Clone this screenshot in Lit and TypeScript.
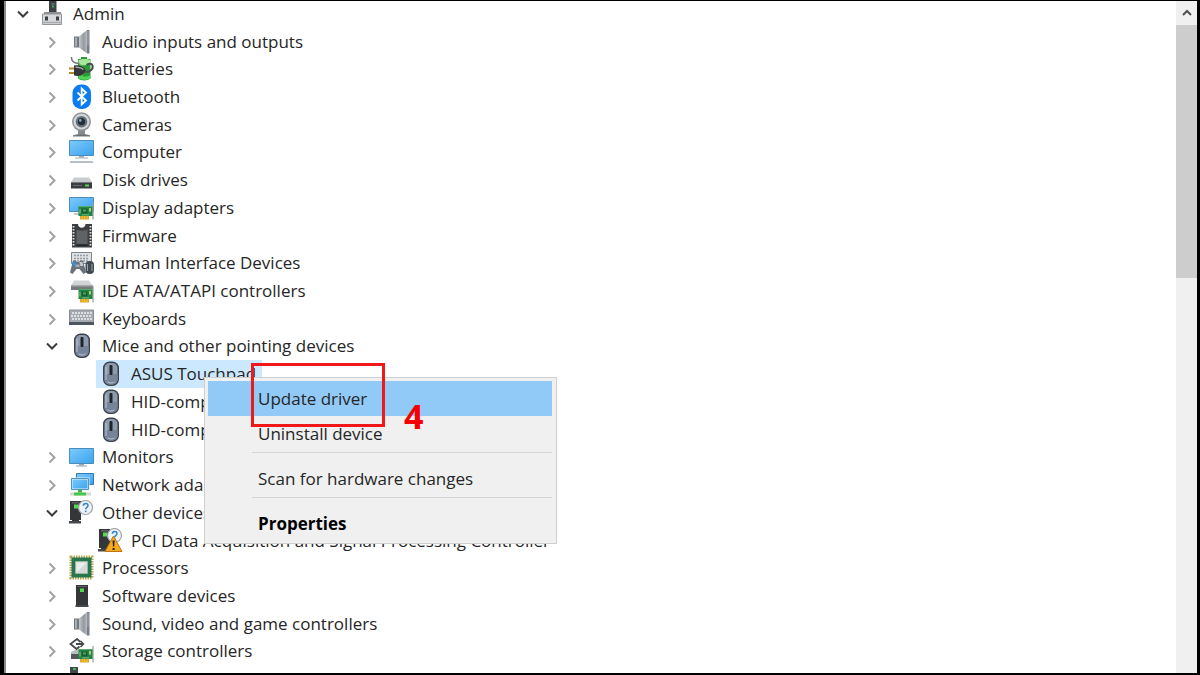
import { LitElement, html, svg, css, nothing, TemplateResult } from "lit";
import { customElement, property } from "lit/decorators.js";

type Glyph = TemplateResult<2>;

interface Device {
  label: string;
  icon: string;
  level: number;
  state?: "open" | "closed";
  selected?: boolean;
}

const mouse = svg`
  <rect x="5" y=".5" width="16" height="24.500" rx="6.500" fill="#3b424c"/>
  <rect x="6.500" y="2" width="13" height="21.500" rx="5" fill="#8e9aad"/>
  <path d="M6.500 13h13v5.500a5 5 0 0 1-5 5h-3a5 5 0 0 1-5-5z" fill="#76849a"/>
  <path d="M8 6v13M9.500 20.800c2 1.600 5 1.600 7 0" stroke="#b9c3d0" fill="none"/>
  <rect x="11.500" y="4" width="3" height="10" rx="1" fill="#20252c"/>`;

const speaker = svg`
  <defs><linearGradient id="cone" x1="0" x2="1"><stop offset="0" stop-color="#c3c7ca"/><stop offset=".6" stop-color="#9499a0"/><stop offset="1" stop-color="#b9bdc1"/></linearGradient></defs>
  <path d="M5 7.500h6v11H5z" fill="#737981"/><path d="M6 8.500h2v9H6z" fill="#a9aeb4"/>
  <path d="M10 7.500l8-6.500v23.500l-8-6z" fill="url(#cone)"/>
  <path d="M18 1h2.500v23.500H18z" fill="#777d84"/><path d="M18.500 2h1v14h-1z" fill="#a8adb2"/>`;

const card = svg`
  <path d="M9.500 11h14.500v10H9.500z" fill="#238447"/><path d="M9.500 11h14v1h-14z" fill="#58ad6a"/>
  <path d="M12.500 13.500h6v5h-6z" fill="#1b5e33"/><path d="M14 14.500h3v2h-3z" fill="#4ca463"/><path d="M20 13h2v3.500h-2z" fill="#a7d36e"/>
  <path d="M10.500 14h1v4.500h-1zM13 19.500h7v.8h-7z" fill="#8fce83"/>
  <path d="M11 21h9v3.500h-9z" fill="#dda71f"/><path d="M13 21v3.500M15.500 21v3.500M18 21v3.500" stroke="#f3ce62" stroke-width=".7"/>
  <path d="M24 8v16.500" stroke="#9aa2a0" stroke-width="1.300"/>`;

const question = svg`
  <path d="M1 1h11v19H1z" fill="#343638"/><path d="M3 2h7v1.500H3z" fill="#5c6063"/>
  <path d="M5 4.500h4v4H5z" fill="#54dc50"/><path d="M3 19h7v2.500H3z" fill="#343638"/><path d="M0 21h12v2.500H0z" fill="#45484b"/>
  <circle cx="16.500" cy="7.500" r="7" fill="#eef2f5" stroke="#a0a6ac" stroke-width="1.200"/>
  <path d="M14.300 5.700c.2-3 4.700-3 4.700-.2 0 1.900-2.300 1.900-2.300 3.800" fill="none" stroke="#2f83cf" stroke-width="1.500"/><circle cx="16.700" cy="11.300" r=".9" fill="#2f83cf"/>`;

const sky = (id: string) => svg`<defs><linearGradient id=${id} x1="0" y1="0" x2="1" y2="1"><stop offset="0" stop-color="#7ecbfb"/><stop offset="1" stop-color="#3aa2ee"/></linearGradient></defs>`;

const glyphs: Record<string, Glyph> = {
  hub: svg`
    <path d="M9 0h7.500v11H9z" fill="#3e4246"/><path d="M11.500 2h3v2h-3z" fill="#62676b"/><path d="M12 4.500h2v2h-2z" fill="#3fae50"/>
    <path d="M4 11h17v2H4z" fill="#8d9093"/><path d="M2.500 13h19v10.500h-19z" fill="#d6d8da" stroke="#929598"/>
    <path d="M5 15.500h3v4H5zM16 15.500h3v4h-3z" fill="#3d4043"/><path d="M2.500 21.500h19" stroke="#a8abad" stroke-width="1.500"/>`,
  speaker,
  battery: svg`
    <path d="M9 3h3V1h6v2h3.500v19.500c-3 2.500-9.500 2.500-12.500 0z" fill="#2c9a35"/>
    <path d="M9.500 4c3-1.500 9-1.500 12 0v4c-3 1.500-9 1.500-12 0z" fill="#a5e89a"/>
    <path d="M10 9h4v12h-4z" fill="#4cbc4c"/><path d="M9.500 19c3 2 9 2 12 0v3.500c-3 1.800-9 1.800-12 0z" fill="#4ed558"/>
    <path d="M2.500 1c-.5 4 2 6 8 6.500" fill="none" stroke="#777b7e" stroke-width="1.500"/>
    <path d="M16.500 16c5 0 8-3 7-6.500-.8-2.500-4-2-6-.5" fill="none" stroke="#4a4e51" stroke-width="2"/>
    <path d="M0 12.500h6M0 17h6" stroke="#b28a26" stroke-width="2"/>
    <path d="M5 9.500c5-1 10 .5 12 5-2 4.500-7 6.500-12 5z" fill="#34373a"/><path d="M6.500 11.300c4-.5 6 .4 8 2.200" fill="none" stroke="#a3a7aa" stroke-width="1.500"/>`,
  bluetooth: svg`
    <rect x="3.500" y=".5" width="18.500" height="24.500" rx="8.500" fill="#0a7df0"/>
    <path d="M8.500 8.500l8.500 8-4.300 4V4.500l4.300 4-8.500 8" fill="none" stroke="#fff" stroke-width="1.800"/>`,
  camera: svg`
    <path d="M9 18h7v4H9z" fill="#85898c"/><path d="M4 24c3-2 14-2 17 0z" fill="#5d6164" stroke="#777b7e"/>
    <circle cx="12.500" cy="9.700" r="9.500" fill="#909497"/><circle cx="12.500" cy="9.700" r="7.900" fill="#d2d5d7"/>
    <circle cx="12.500" cy="9.700" r="5.800" fill="#66717b"/><circle cx="12.500" cy="9.700" r="3.600" fill="#252d36"/><circle cx="11.300" cy="8.400" r="1.300" fill="#8db1cc"/>`,
  computer: svg`${sky("pc")}
    <path d="M.5 1.500h24v15H.5z" fill="url(#pc)" stroke="#4a8dbd"/><path d="M10 17h5v1.500h-5z" fill="#9aa9b5"/><path d="M6 18.500h13v1H6z" fill="#a3b0ba"/>
    <path d="M1.500 22h22l1 2H.5z" fill="#b4bfc8"/>`,
  disk: svg`
    <path d="M5 10.500h15l3 4.500H2z" fill="#c9ccce"/><path d="M2 15h21v6.500H2z" fill="#3b3e41"/><path d="M2 15h21v1H2z" fill="#75797c"/>
    <path d="M16 17.500h4v2h-4z" fill="#58d34f"/><path d="M4 18.500h9" stroke="#696d70"/>`,
  display: svg`${sky("da")}
    <path d="M.5 2.500h24v14H.5z" fill="url(#da)" stroke="#4a8dbd"/><path d="M5 18.500h5v1H5z" fill="#8595a2"/>${card}`,
  firmware: svg`
    <path d="M3 1h6c0 5 7.500 5 7.500 0H23v23.500H3z" fill="#3c3e40"/><path d="M7.500 6.500c2 1.500 9 1.500 11 0V21h-11z" fill="#606366"/>
    <path d="M4.500 3v20.500M21.500 3v20.500" stroke="#e2e4e5" stroke-width="1.800" stroke-dasharray="1.600 1.400"/><path d="M7.500 21.500h11V23h-11z" fill="#222425"/>`,
  hid: svg`
    <path d="M2.500 2.500h20v11h-20z" fill="#dfe2e4" stroke="#7c848a"/><path d="M5 5.500h15M5 8.500h15M5 11h15" stroke="#949ca3" stroke-width="1.500" stroke-dasharray="2 1"/>
    <path d="M4 10.500h2.500l1.500 1.500h2l1.500-1.500H14l3 12-2.500 1.500-4-5h-3l-4 5L1 22.500z" fill="#6a727a"/>
    <path d="M3.500 12h3v4h-3z" fill="#318fd7"/><path d="M10.500 12h3l.8 4h-3z" fill="#c4cacf"/><path d="M6.500 14.500h4v2.500h-4z" fill="#a4abb1"/>
    <path d="M6 24l2.500-4h2L13 24z" fill="#fff"/>
    <rect x="16.500" y="11" width="8.500" height="13" rx="4" fill="#414951"/><path d="M18.500 14v7M23 14v7" stroke="#9ca5ad"/>`,
  ide: svg`<path d="M5 2.500h15l4 5.500H2z" fill="#d2d4d6"/><path d="M2 7.500h22V12H2z" fill="#77797b"/><path d="M2 7.500h22v1H2z" fill="#a8aaac"/>${card}`,
  keyboard: svg`
    <path d="M.5 4h24v14H.5z" fill="#a4aab0" stroke="#8a9096"/><path d="M0 16h25v3H0z" fill="#4d565e"/>
    <path d="M3 7h20M2 10h21M3 13h20" stroke="#eef0f2" stroke-width="1.600" stroke-dasharray="2 1"/>`,
  mouse,
  monitor: svg`${sky("mo")}
    <path d="M.5 4.500h24v15H.5z" fill="url(#mo)" stroke="#4a8dbd"/><path d="M10 20h5v1.500h-5z" fill="#9aa9b5"/><path d="M7 21.500h11v1H7z" fill="#8da2b3"/>`,
  network: svg`${sky("ne")}
    <path d="M7.500 1.500h17v11h-17z" fill="url(#ne)" stroke="#347aaf"/><path d="M2.500 6.500h17v11h-17z" fill="url(#ne)" stroke="#e4f3fc" stroke-width="2"/><path d="M2.500 6.500h17v11h-17z" fill="none" stroke="#347aaf" stroke-width=".8"/>
    <path d="M9 17.500h4v3.500H9z" fill="#45b34b"/><path d="M1 20.500h21v3H1z" fill="#d3d8d5"/><path d="M5 20.500h12v3H5z" fill="#46c64b"/>`,
  other: question,
  warning: svg`${question}
    <path d="M15.500 8l8.500 15.500H7z" fill="#f5aa22" stroke="#bd7612" stroke-linejoin="round"/><path d="M14.500 12.500h2.200l-.5 6H15zM14.600 20h2v2h-2z" fill="#2d2413"/>`,
  processor: svg`
    <path d="M2 2h21v21H2z" fill="none" stroke="#b8a950" stroke-width="3" stroke-dasharray="1.500 1"/>
    <path d="M2.500 2.500h20v20h-20z" fill="#28764e"/><path d="M6.500 6.500h12v12h-12z" fill="#d5d9d8" stroke="#9bb5a5"/><path d="M7.500 7.500h10l-10 10z" fill="#eceeed"/>`,
  software: svg`
    <path d="M7 2h12v20H7z" fill="#343638"/><path d="M8 3h10v1H8z" fill="#5c6063"/><path d="M11 5.500h4v3.500h-4z" fill="#50dc50"/><path d="M6.500 22h13v2h-13z" fill="#45484b"/>`,
  storage: svg`
    <path d="M11.500 4L8 1 1.500 6 7.500 11l3-2.500M7 6h7" fill="none" stroke="#45494c" stroke-width="1.800"/><path d="M11.500 3l3 3-3 3" fill="none" stroke="#45494c" stroke-width="1.500"/>
    <path d="M2 14l4-2h6v8H2z" fill="#b9bdbf"/><path d="M2 16h9v5H2z" fill="#53585b"/>${card}`,
  printer: svg`<path d="M1 1h8v8H1z" fill="#43484c"/><path d="M4 2h3v2H4z" fill="#49b25a"/>`,
};

const devices: Device[] = [
  { label: "Admin", icon: "hub", level: 0, state: "open" },
  { label: "Audio inputs and outputs", icon: "speaker", level: 1, state: "closed" },
  { label: "Batteries", icon: "battery", level: 1, state: "closed" },
  { label: "Bluetooth", icon: "bluetooth", level: 1, state: "closed" },
  { label: "Cameras", icon: "camera", level: 1, state: "closed" },
  { label: "Computer", icon: "computer", level: 1, state: "closed" },
  { label: "Disk drives", icon: "disk", level: 1, state: "closed" },
  { label: "Display adapters", icon: "display", level: 1, state: "closed" },
  { label: "Firmware", icon: "firmware", level: 1, state: "closed" },
  { label: "Human Interface Devices", icon: "hid", level: 1, state: "closed" },
  { label: "IDE ATA/ATAPI controllers", icon: "ide", level: 1, state: "closed" },
  { label: "Keyboards", icon: "keyboard", level: 1, state: "closed" },
  { label: "Mice and other pointing devices", icon: "mouse", level: 1, state: "open" },
  { label: "ASUS Touchpad", icon: "mouse", level: 2, selected: true },
  { label: "HID-compliant mouse", icon: "mouse", level: 2 },
  { label: "HID-compliant mouse", icon: "mouse", level: 2 },
  { label: "Monitors", icon: "monitor", level: 1, state: "closed" },
  { label: "Network adapters", icon: "network", level: 1, state: "closed" },
  { label: "Other devices", icon: "other", level: 1, state: "open" },
  { label: "PCI Data Acquisition and Signal Processing Controller", icon: "warning", level: 2 },
  { label: "Processors", icon: "processor", level: 1, state: "closed" },
  { label: "Software devices", icon: "software", level: 1, state: "closed" },
  { label: "Sound, video and game controllers", icon: "speaker", level: 1, state: "closed" },
  { label: "Storage controllers", icon: "storage", level: 1, state: "closed" },
  { label: "System devices", icon: "printer", level: 1, state: "closed" },
];

@customElement("device-row")
class DeviceRow extends LitElement {
  @property({ attribute: false }) device!: Device;

  static styles = css`
    :host { display: block; min-height: 0; }
    .row { display: flex; align-items: center; height: 100%; box-sizing: border-box; }
    .level-0 { padding-left: 9px; }
    .level-1 { padding-left: 38px; }
    .level-2 { padding-left: 67px; }
    .toggle { flex: none; width: 16px; height: 16px; margin-right: 7px; padding: 0; border: 0; background: none; }
    .chevron { display: block; width: 16px; height: 16px; fill: none; stroke-width: 2; }
    .closed { stroke: #a3a3a3; }
    .open { stroke: #3c3c3c; }
    .item { display: flex; align-items: center; height: 100%; padding: 0 6px 0 2px; gap: 7px; }
    .selected { background: #cce8ff; }
    .icon { flex: none; width: 26px; height: 26px; }
    .label { white-space: nowrap; }
  `;

  render() {
    const { label, icon, level, state, selected } = this.device;
    return html`
      <div class="row level-${level}">
        ${state
          ? html`<button class="toggle" aria-label="${state === "open" ? "Collapse" : "Expand"} ${label}">
              <svg class="chevron ${state}" viewBox="0 0 16 16" aria-hidden="true">
                <path d=${state === "open" ? "M3 5.500l5 5 5-5" : "M5.500 3.500l5 5-5 5"} />
              </svg>
            </button>`
          : html`<span class="toggle"></span>`}
        <div class="item ${selected ? "selected" : ""}">
          <svg class="icon" viewBox="0 0 26 26" aria-hidden="true">${glyphs[icon] ?? nothing}</svg>
          <span class="label">${label}</span>
        </div>
      </div>
    `;
  }
}

@customElement("context-menu")
class ContextMenu extends LitElement {
  static styles = css`
    :host { display: block; box-sizing: border-box; padding: 3px 4px 2px 3px; border: 1px solid #cfcfcf; background: #f0f0f0; }
    .entry { display: block; width: 100%; height: 35px; padding: 0 0 0 50px; border: 0; background: none; color: #262626; font: inherit; text-align: left; }
    .active { background: #91c9f7; }
    .default { color: #000; font-weight: 700; }
    .divider { height: 1px; margin: 1px 0 8px 44px; border: 0; background: #d6d6d6; }
  `;

  render() {
    return html`
      <button class="entry active" role="menuitem">Update driver</button>
      <button class="entry" role="menuitem">Uninstall device</button>
      <hr class="divider" />
      <button class="entry" role="menuitem">Scan for hardware changes</button>
      <hr class="divider" />
      <button class="entry default" role="menuitem">Properties</button>
    `;
  }
}

@customElement("app-root")
class AppRoot extends LitElement {
  static styles = css`
    :host { display: block; height: 100vh; color: #262626; font: 17px/24px "Open Sans", "Segoe UI", sans-serif; }
    .window { position: relative; display: flex; height: 100%; box-sizing: border-box; overflow: hidden; border: solid #000; border-width: 1px 3px 2px 4px; background: #fff; }
    .edge { flex: none; width: 2px; background: #8a8a8a; }
    .tree { flex: 1; min-width: 0; display: grid; grid-auto-rows: 1fr; height: 693px; margin-top: -1px; }
    .scrollbar { flex: none; width: 21px; background: #f0f0f0; }
    .up { display: grid; place-items: center; width: 100%; height: 24px; padding: 0; border: 0; background: #f0f0f0; }
    .arrow { width: 12px; height: 12px; fill: none; stroke: #505050; stroke-width: 2; }
    .thumb { height: 253px; background: #cdcdcd; }
    .menu { position: absolute; left: 200px; top: 376px; width: 353px; }
    .frame { position: absolute; left: 247px; top: 362px; width: 134px; height: 64px; box-sizing: border-box; border: 3px solid #f01818; }
    .step { position: absolute; left: 400px; top: 395px; color: #f80000; font-size: 34px; line-height: 40px; font-weight: 700; }
  `;

  render() {
    return html`
      <main class="window">
        <div class="edge"></div>
        <div class="tree" aria-label="Devices">
          ${devices.map((device) => html`<device-row .device=${device}></device-row>`)}
        </div>
        <div class="scrollbar">
          <button class="up" aria-label="Scroll up">
            <svg class="arrow" viewBox="0 0 12 12" aria-hidden="true"><path d="M2 8l4-4 4 4" /></svg>
          </button>
          <div class="thumb"></div>
        </div>
        <context-menu class="menu" role="menu"></context-menu>
        <div class="frame"></div>
        <span class="step">4</span>
      </main>
    `;
  }
}
